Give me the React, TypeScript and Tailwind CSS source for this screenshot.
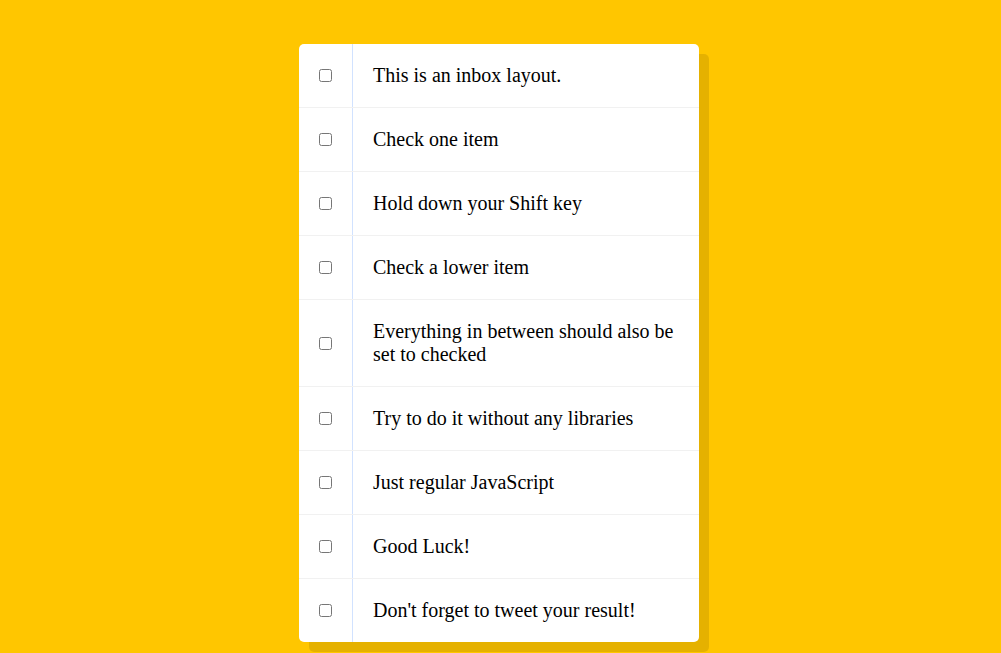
const items = [
  "This is an inbox layout.",
  "Check one item",
  "Hold down your Shift key",
  "Check a lower item",
  "Everything in between should also be set to checked",
  "Try to do it without any libraries",
  "Just regular JavaScript",
  "Good Luck!",
  "Don't forget to tweet your result!",
];

export default function App() {
  return (
    <div className="min-h-[653px] bg-[#ffc600] pt-[44px] pr-[3px] font-['Liberation_Serif',serif]">
      <div className="mx-auto w-[400px] rounded-[5px] bg-white shadow-[10px_10px_0_rgba(0,0,0,0.1)]">
        {items.map((text, i) => (
          <div
            key={i}
            className="flex items-center border-b border-[#f1f1f1] last:border-b-0"
          >
            <input type="checkbox" className="m-5" />
            <p className="m-0 border-l border-[#d1e2ff] p-5 text-[20px] leading-[23px] text-black">
              {text}
            </p>
          </div>
        ))}
      </div>
    </div>
  );
}
